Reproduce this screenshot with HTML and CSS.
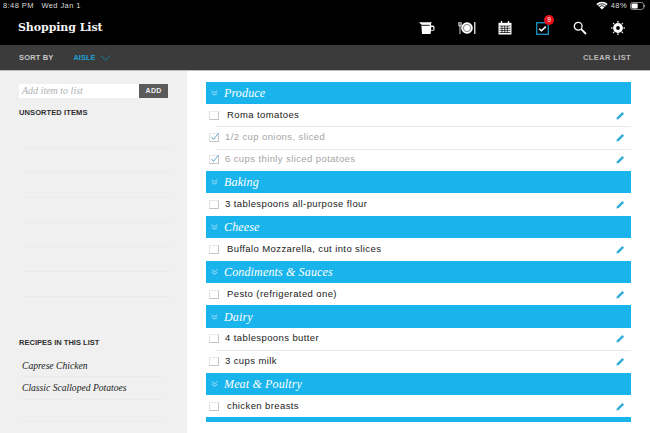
FILE: index.html
```html
<!DOCTYPE html>
<html lang="en">
<head>
<meta charset="utf-8">
<title>Shopping List</title>
<link rel="stylesheet" href="styles.css">
</head>
<body>
<div class="app">
  <header class="top">
    <div class="status">
      <span>8:48 PM&nbsp;&nbsp;&nbsp;Wed Jan 1</span>
      <span class="status-right">
        <svg class="wifi" width="12" height="9" viewBox="0 0 12 9"><path d="M6 8.6 0.3 3a8.2 8.2 0 0 1 11.4 0z" fill="#fff"/><path d="M1.9 4.4a5.9 5.9 0 0 1 8.2 0M3.3 5.9a3.8 3.8 0 0 1 5.4 0" stroke="#000" stroke-width=".8" fill="none"/></svg>
        <span>48%</span>
        <svg width="15" height="8" viewBox="0 0 15 8"><rect x=".5" y=".5" width="13" height="7" rx="2" fill="none" stroke="#888"/><rect x="1.5" y="1.5" width="6.2" height="5" rx="1" fill="#fff"/><rect x="14" y="2.7" width="1" height="2.6" fill="#888"/></svg>
      </span>
    </div>
    <div class="titlebar">
      <h1 class="title">Shopping List</h1>
      <nav class="icons">
        <svg class="ico" width="18" height="14" viewBox="0 0 18 14"><path d="M1 1.200h13l-1 1.200v2.200h1.500c1.400 0 2 .8 2 2v1.500c0 1.200-.8 2-2 2H13l-.5 3H4l-.7-9.500z" fill="#fff"/><path d="M13.200 6h1.300c.6 0 .9.3.9.9v1.400c0 .6-.3.900-.9.900h-1.400z" fill="#000"/><path d="M2.800 4.300h8.900" stroke="#000" stroke-width=".9"/></svg>
        <svg class="ico" width="18" height="14" viewBox="0 0 18 14"><circle cx="9" cy="7" r="5.800" fill="#fff"/><circle cx="9" cy="7" r="3.600" fill="none" stroke="#777" stroke-width=".9"/><path d="M.8 1v4M2 1v12M3.200 1v4M.8 5h2.400" stroke="#fff" stroke-width=".8" fill="none"/><path d="M16.800 1v12" stroke="#fff" stroke-width="1.200"/></svg>
        <svg class="ico" width="14" height="14" viewBox="0 0 14 14"><rect x=".5" y="1.800" width="13" height="11.700" fill="#fff"/><path d="M3.500 0v3M10.500 0v3" stroke="#fff" stroke-width="1.300"/><path d="M1.500 5h11M1.500 7.300h11M1.500 9.400h11M1.500 11.500h11M4 5v7M6.700 5v7M9.300 5v7" stroke="#000" stroke-width=".7"/></svg>
        <span class="check-wrap">
          <svg class="ico" width="13" height="13" viewBox="0 0 13 13"><rect x=".7" y=".7" width="11.600" height="11.600" fill="none" stroke="#1f93c4" stroke-width="1.300"/><path d="M3.200 6.800 5.400 8.800 9.800 4.600" fill="none" stroke="#fff" stroke-width="1.500"/></svg>
          <span class="badge">9</span>
        </span>
        <svg class="ico" width="14" height="14" viewBox="0 0 14 14"><circle cx="5.200" cy="5.200" r="3.900" fill="none" stroke="#fff" stroke-width="1.300"/><path d="M8.200 8.200 13 13" stroke="#fff" stroke-width="1.800"/></svg>
        <svg class="ico" width="14" height="14" viewBox="0 0 14 14"><path d="M7 2.200 5.900.3h2.200zM7 11.800l1.100 1.900H5.900zM2.200 7 .3 8.100V5.900zM11.800 7l1.900-1.100v2.200zM3.600 3.600 1.500 3 3 1.500zM10.400 10.400l2.100.6-1.500 1.500zM10.400 3.600 11 1.500 12.500 3zM3.600 10.400 3 12.500 1.500 11z" fill="#fff"/><circle cx="7" cy="7" r="3.400" fill="none" stroke="#fff" stroke-width="3"/></svg>
      </nav>
    </div>
  </header>

  <div class="toolbar">
    <span class="tool-label">SORT BY</span>
    <span class="tool-value">AISLE</span>
    <svg class="chev" width="11" height="6" viewBox="0 0 11 6"><path d="M.5.500 5.500 5 10.500.5" fill="none" stroke="#1b7fa6" stroke-width="1"/></svg>
    <span class="tool-clear">CLEAR LIST</span>
  </div>

  <div class="content">
    <aside class="side">
      <div class="add">
        <span class="add-input">Add item to list</span>
        <span class="add-btn">ADD</span>
      </div>
      <h2 class="side-head">UNSORTED ITEMS</h2>
      <ul class="unsorted">
        <li></li><li></li><li></li><li></li><li></li><li></li><li></li>
      </ul>
      <h2 class="side-head recipes-head">RECIPES IN THIS LIST</h2>
      <ul class="recipes">
        <li>Caprese Chicken</li>
        <li>Classic Scalloped Potatoes</li>
        <li></li>
      </ul>
    </aside>

    <main class="list">
      <div class="sec"><svg class="dbl" width="7" height="6" viewBox="0 0 7 6"><path d="M.7.700 3.500 2.800 6.300.7M.7 3.200 3.500 5.300 6.300 3.200" fill="none" stroke="#a5e1f7" stroke-width="1"/></svg>Produce</div>
      <div class="item ind"><span class="box"></span><span class="txt">Roma tomatoes</span><svg class="pen" width="9" height="9" viewBox="0 0 9 9"><path d="M.4 8.600 1 6.200 6.300.9 8.100 2.700 2.800 8z" fill="#36acd8"/></svg></div>
      <div class="item done"><span class="box"><svg class="tick" width="10" height="10" viewBox="0 0 10 10"><path d="M1.500 5 3.500 7.500 8.500 1" fill="none" stroke="#5fa9c6" stroke-width="1"/></svg></span><span class="txt">1/2 cup onions, sliced</span><svg class="pen" width="9" height="9" viewBox="0 0 9 9"><path d="M.4 8.600 1 6.200 6.300.9 8.100 2.700 2.800 8z" fill="#36acd8"/></svg></div>
      <div class="item done"><span class="box"><svg class="tick" width="10" height="10" viewBox="0 0 10 10"><path d="M1.500 5 3.500 7.500 8.500 1" fill="none" stroke="#5fa9c6" stroke-width="1"/></svg></span><span class="txt">6 cups thinly sliced potatoes</span><svg class="pen" width="9" height="9" viewBox="0 0 9 9"><path d="M.4 8.600 1 6.200 6.300.9 8.100 2.700 2.800 8z" fill="#36acd8"/></svg></div>
      <div class="sec"><svg class="dbl" width="7" height="6" viewBox="0 0 7 6"><path d="M.7.700 3.500 2.800 6.300.7M.7 3.200 3.500 5.300 6.300 3.200" fill="none" stroke="#a5e1f7" stroke-width="1"/></svg>Baking</div>
      <div class="item"><span class="box"></span><span class="txt">3 tablespoons all-purpose flour</span><svg class="pen" width="9" height="9" viewBox="0 0 9 9"><path d="M.4 8.600 1 6.200 6.300.9 8.100 2.700 2.800 8z" fill="#36acd8"/></svg></div>
      <div class="sec"><svg class="dbl" width="7" height="6" viewBox="0 0 7 6"><path d="M.7.700 3.500 2.800 6.300.7M.7 3.200 3.500 5.300 6.300 3.200" fill="none" stroke="#a5e1f7" stroke-width="1"/></svg>Cheese</div>
      <div class="item ind"><span class="box"></span><span class="txt">Buffalo Mozzarella, cut into slices</span><svg class="pen" width="9" height="9" viewBox="0 0 9 9"><path d="M.4 8.600 1 6.200 6.300.9 8.100 2.700 2.800 8z" fill="#36acd8"/></svg></div>
      <div class="sec"><svg class="dbl" width="7" height="6" viewBox="0 0 7 6"><path d="M.7.700 3.500 2.800 6.300.7M.7 3.200 3.500 5.300 6.300 3.200" fill="none" stroke="#a5e1f7" stroke-width="1"/></svg>Condiments &amp; Sauces</div>
      <div class="item ind"><span class="box"></span><span class="txt">Pesto (refrigerated one)</span><svg class="pen" width="9" height="9" viewBox="0 0 9 9"><path d="M.4 8.600 1 6.200 6.300.9 8.100 2.700 2.800 8z" fill="#36acd8"/></svg></div>
      <div class="sec"><svg class="dbl" width="7" height="6" viewBox="0 0 7 6"><path d="M.7.700 3.500 2.800 6.300.7M.7 3.200 3.500 5.300 6.300 3.200" fill="none" stroke="#a5e1f7" stroke-width="1"/></svg>Dairy</div>
      <div class="item"><span class="box"></span><span class="txt">4 tablespoons butter</span><svg class="pen" width="9" height="9" viewBox="0 0 9 9"><path d="M.4 8.600 1 6.200 6.300.9 8.100 2.700 2.800 8z" fill="#36acd8"/></svg></div>
      <div class="item"><span class="box"></span><span class="txt">3 cups milk</span><svg class="pen" width="9" height="9" viewBox="0 0 9 9"><path d="M.4 8.600 1 6.200 6.300.9 8.100 2.700 2.800 8z" fill="#36acd8"/></svg></div>
      <div class="sec"><svg class="dbl" width="7" height="6" viewBox="0 0 7 6"><path d="M.7.700 3.500 2.800 6.300.7M.7 3.200 3.500 5.300 6.300 3.200" fill="none" stroke="#a5e1f7" stroke-width="1"/></svg>Meat &amp; Poultry</div>
      <div class="item ind"><span class="box"></span><span class="txt">chicken breasts</span><svg class="pen" width="9" height="9" viewBox="0 0 9 9"><path d="M.4 8.600 1 6.200 6.300.9 8.100 2.700 2.800 8z" fill="#36acd8"/></svg></div>
      <div class="sec-end"></div>
    </main>
  </div>
</div>
</body>
</html>
```
FILE: styles.css
```css
* { box-sizing: border-box; }
html, body { margin: 0; padding: 0; }
body { width: 650px; height: 433px; overflow: hidden; background: #fff; font-family: "Liberation Sans", sans-serif; }
ul { list-style: none; margin: 0; padding: 0; }
.app { display: flex; flex-direction: column; height: 433px; }

.top { height: 45px; background: #000; color: #fff; }
.status { height: 11px; padding: 0 5px 0 3px; display: flex; justify-content: space-between; align-items: center; font-size: 7.500px; letter-spacing: .42px; color: #ddd; }
.status-right { display: flex; align-items: center; gap: 3px; }
.titlebar { height: 34px; padding: 0 25px 0 18px; display: flex; justify-content: space-between; align-items: flex-start; }
.title { margin: 10px 0 0; font: bold 11px/14px "DejaVu Serif", serif; letter-spacing: -.08px; color: #f4f4f4; }
.icons { display: flex; align-items: center; margin-top: 5px; height: 24px; }
.ico { display: block; flex: none; }
.ico + .ico { margin-left: 22px; }
.check-wrap { position: relative; display: block; margin: 0 24px; }
.check-wrap .ico { margin: 0; }
.check-wrap + .ico + .ico { margin-left: 24px; }
.badge { position: absolute; top: -7px; right: -5px; width: 10px; height: 10px; border-radius: 50%; background: #e8111c; color: #fff; font-size: 6.500px; line-height: 10px; text-align: center; }

.toolbar { height: 26px; background: #3b3b3b; border-bottom: 1px solid #bdbdbd; padding: 0 19px; display: flex; align-items: center; font-size: 7.500px; font-weight: bold; letter-spacing: .15px; color: #c8c8c8; }
.tool-value { margin-left: 20px; color: #1c9fd4; letter-spacing: 0; }
.chev { margin-left: 5px; }
.tool-clear { margin-left: auto; color: #bcbcbc; letter-spacing: .38px; }

.content { flex: 1; display: flex; min-height: 0; }
.side { width: 187px; background: #f0f0f0; padding: 13px 19px 0; display: flex; flex-direction: column; }
.add { display: flex; height: 14px; }
.add-input { width: 121px; background: #fff; font: italic 10px/14px "Liberation Serif", serif; color: #b0b0b0; padding-left: 3px; }
.add-btn { width: 29px; background: #5a5a5a; color: #eee; font-size: 7px; font-weight: bold; letter-spacing: .3px; line-height: 14px; text-align: center; }
.side-head { margin: 10px 0 0; font-size: 7.500px; line-height: 10px; font-weight: bold; letter-spacing: .1px; color: #2e2e2e; }
.unsorted { margin: 0 -2px 0 5px; }
.unsorted li { height: 24.700px; border-bottom: 1px solid #ebebeb; }
.unsorted li:first-child { height: 30.500px; }
.recipes-head { margin-top: 41px; letter-spacing: .02px; }
.recipes { margin: 7px 3px 0 3px; }
.recipes li { height: 22.500px; border-bottom: 1px solid #ebebeb; font: italic 9.600px/22px "Liberation Serif", serif; letter-spacing: 0; color: #222; white-space: nowrap; }

.list { flex: 1; padding: 10.500px 19px 0; }
.sec { height: 22.400px; background: #1ab4ec; color: #fff; font: italic 12px/22px "Liberation Serif", serif; letter-spacing: .15px; display: flex; align-items: center; padding-left: 5px; }
.dbl { margin-right: 6px; flex: none; }
.item { height: 22.400px; display: flex; align-items: center; position: relative; padding-left: 3px; font-size: 9.500px; letter-spacing: .4px; color: #1a1a1a; }
.item + .item::before { content: ""; position: absolute; left: 10px; right: 0; top: 0; border-top: 1px solid #e9e9e9; }
.box { width: 10px; height: 9px; border: 1px solid #c4c4c4; border-top-color: #e8e8e8; border-left-color: #e0e0e0; background: #fff; margin-right: 6px; flex: none; position: relative; }
.txt { margin-bottom: 2px; }
.ind .txt { margin-left: 2px; }
.done { color: #a5a5a5; }
.tick { position: absolute; left: 0; top: -2px; }
.pen { margin-left: auto; margin-right: 6px; }
.sec-end { height: 5px; background: #1ab4ec; }
```
